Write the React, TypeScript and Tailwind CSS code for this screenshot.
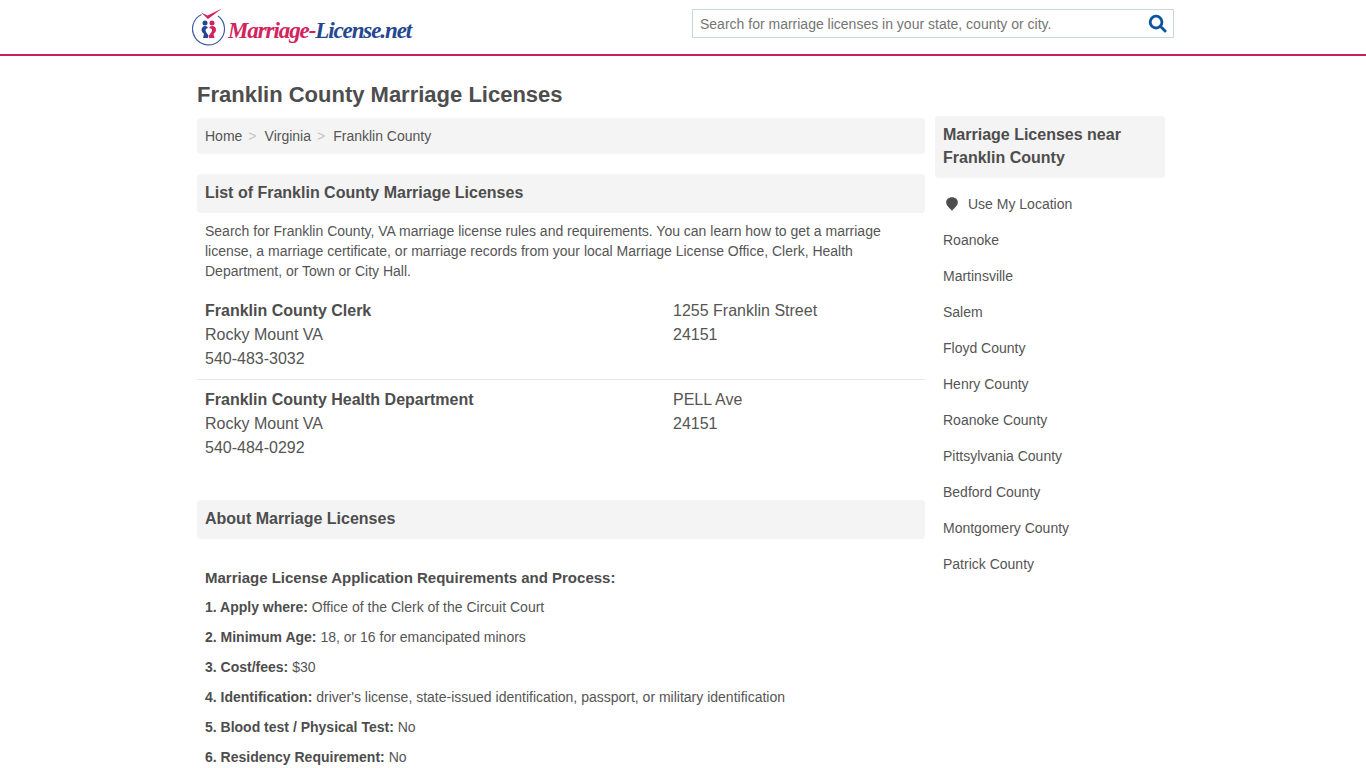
import React from 'react';

const nearby = [
  'Roanoke',
  'Martinsville',
  'Salem',
  'Floyd County',
  'Henry County',
  'Roanoke County',
  'Pittsylvania County',
  'Bedford County',
  'Montgomery County',
  'Patrick County',
];

const offices = [
  {
    name: 'Franklin County Clerk',
    city: 'Rocky Mount VA',
    phone: '540-483-3032',
    street: '1255 Franklin Street',
    zip: '24151',
  },
  {
    name: 'Franklin County Health Department',
    city: 'Rocky Mount VA',
    phone: '540-484-0292',
    street: 'PELL Ave',
    zip: '24151',
  },
];

const facts = [
  ['1. Apply where:', 'Office of the Clerk of the Circuit Court'],
  ['2. Minimum Age:', '18, or 16 for emancipated minors'],
  ['3. Cost/fees:', '$30'],
  ['4. Identification:', "driver's license, state-issued identification, passport, or military identification"],
  ['5. Blood test / Physical Test:', 'No'],
  ['6. Residency Requirement:', 'No'],
];

const Logo = () => (
  <div className="flex items-start">
    <svg width="34" height="38" viewBox="0 0 34 38" className="shrink-0">
      <path d="M9.5 6.5 A16 16 0 1 0 26 8" fill="none" stroke="#3f5ea6" strokeWidth="1.2" />
      <path d="M9 4.5 L15.5 7.5 L30 0.5 L16 11 Z" fill="#d3235f" />
      <circle cx="13" cy="15" r="2.5" fill="#24478f" />
      <circle cx="20" cy="15" r="2.5" fill="#d3235f" />
      <path d="M9.5 22 Q10 18 13 18 Q15.5 18 16 20 Q12.5 20.5 14 24 L16.5 27.5 L16 30 L11 30 L12 26 Q9.5 24.5 9.5 22 Z" fill="#24478f" />
      <path d="M24 22 Q24 18 20 18 Q18 18 17 20 Q21.5 20.5 19.5 24 L17 27.5 L17 30 L22.5 30 L21.5 26 Q24 24.5 24 22 Z" fill="#d3235f" />
    </svg>
    <div className="ml-[2px] mt-[9px] whitespace-nowrap font-['Liberation_Serif',serif] text-[23px] font-bold italic leading-[28px] tracking-[-1.1px]">
      <span className="text-[#d3235f]">Marriage-</span>
      <span className="text-[#24478f]">License.net</span>
    </div>
  </div>
);

const SectionTitle = ({ children }: { children: React.ReactNode }) => (
  <h2 className="flex h-[39px] items-center rounded-[4px] bg-[#f4f4f4] px-2 pb-[2px] text-base font-bold text-[#4d4d4d]">
    {children}
  </h2>
);

export default function App() {
  return (
    <div className="h-[768px] overflow-hidden bg-white font-['Liberation_Sans',Arial,sans-serif] text-[#555555]">
      <header className="h-[56px] border-b-2 border-[#c8215d]">
        <div className="mx-auto flex w-[982px] items-start justify-between">
          <div className="pt-[8px]">
            <Logo />
          </div>
          <div className="mt-[9px] flex h-[29px] w-[482px] items-center justify-between border border-[#c9d9e0] pl-[7px] pr-[6px]">
            <span className="text-sm text-[#757575]">Search for marriage licenses in your state, county or city.</span>
            <svg width="19" height="19" viewBox="0 0 20 20" fill="none" stroke="#0a559f" strokeWidth="3">
              <circle cx="8.5" cy="8.5" r="6.2" />
              <path d="M13 13 L18 18" strokeLinecap="round" />
            </svg>
          </div>
        </div>
      </header>

      <div className="mx-auto flex w-[972px] items-start gap-[10px]">
        <main className="w-[728px] shrink-0">
          <h1 className="mt-[26px] text-[22px] font-bold leading-[26px] text-[#4d4d4d]">Franklin County Marriage Licenses</h1>
          <nav className="mt-[10px] flex h-[36px] items-center rounded-[4px] bg-[#f4f4f4] px-2 text-sm">
            <span>Home</span>
            <span className="ml-[6px] mr-[8px] text-[#c4c4c4]">&gt;</span>
            <span>Virginia</span>
            <span className="ml-[6px] mr-[8px] text-[#c4c4c4]">&gt;</span>
            <span>Franklin County</span>
          </nav>

          <div className="mt-[20px]">
            <SectionTitle>List of Franklin County Marriage Licenses</SectionTitle>
          </div>
          <p className="mt-[8px] px-2 text-sm leading-[20px]">
            Search for Franklin County, VA marriage license rules and requirements. You can learn how to get a marriage
            license, a marriage certificate, or marriage records from your local Marriage License Office, Clerk, Health
            Department, or Town or City Hall.
          </p>

          <div className="mt-[8px]">
            {offices.map((office, i) => (
              <div
                key={office.name}
                className={`flex px-2 text-base leading-[24px] ${i === 0 ? 'h-[91px] border-b border-[#e6e6e6] pt-[10px]' : 'pt-[8px]'}`}
              >
                <div className="w-[468px]">
                  <div className="font-bold text-[#4d4d4d]">{office.name}</div>
                  <div>{office.city}</div>
                  <div>{office.phone}</div>
                </div>
                <div>
                  <div>{office.street}</div>
                  <div>{office.zip}</div>
                </div>
              </div>
            ))}
          </div>

          <div className="mt-[40px]">
            <SectionTitle>About Marriage Licenses</SectionTitle>
          </div>

          <div className="mt-[29px] px-2 text-sm">
            <div className="text-[15px] font-bold leading-[20px] text-[#4d4d4d]">Marriage License Application Requirements and Process:</div>
            {facts.map(([label, value], i) => (
              <div key={label} className={`leading-[20px] ${i === 0 ? 'mt-[9px]' : 'mt-[10px]'}`}>
                <b className="text-[#4d4d4d]">{label}</b> {value}
              </div>
            ))}
          </div>
        </main>

        <aside className="mt-[60px] w-[230px] shrink-0">
          <h3 className="rounded-[4px] bg-[#f4f4f4] px-2 pb-[9px] pt-[7px] text-base font-bold leading-[23px] text-[#4d4d4d]">
            Marriage Licenses near Franklin County
          </h3>
          <ul className="mt-[8px] text-sm">
            <li className="flex h-[36px] items-center px-2">
              <svg width="12" height="14" viewBox="0 0 12 14" className="ml-[3px] mr-[10px]" fill="#4d4d4d">
                <path d="M6 0.3 C9.6 0.3 11.8 2.6 11.8 5.4 C11.8 8.4 8.4 10.8 6 13.8 C3.6 10.8 0.2 8.4 0.2 5.4 C0.2 2.6 2.4 0.3 6 0.3 Z" />
              </svg>
              Use My Location
            </li>
            {nearby.map((name) => (
              <li key={name} className="flex h-[36px] items-center px-2">
                {name}
              </li>
            ))}
          </ul>
        </aside>
      </div>
    </div>
  );
}
